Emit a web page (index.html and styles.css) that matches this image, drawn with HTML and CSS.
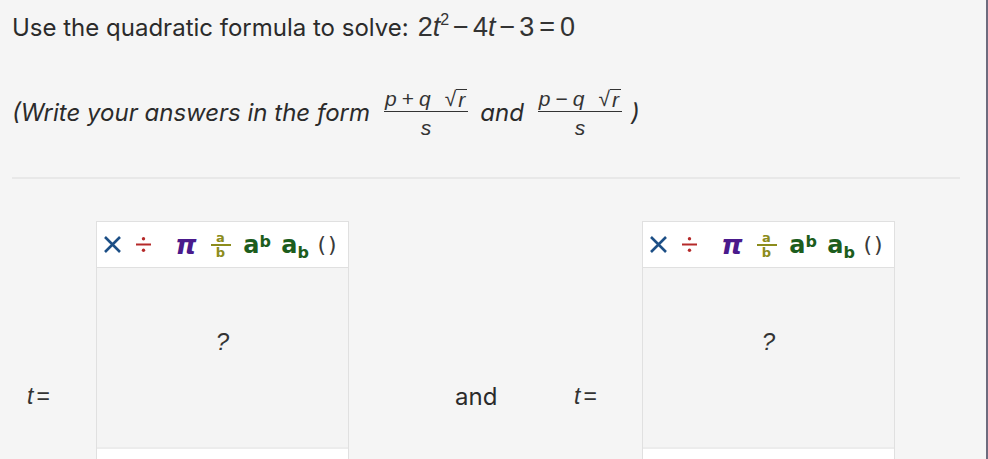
FILE: index.html
```html
<!DOCTYPE html>
<html>
<head>
<meta charset="utf-8">
<link rel="stylesheet" href="styles.css">
</head>
<body>
<div class="page">
  <p class="question"><span class="qtext">Use the quadratic formula to solve:</span> <span class="math big">2<i>t</i><sup>2</sup><span class="op">−</span>4<i>t</i><span class="op">−</span>3<span class="eq">=</span>0</span></p>
  <p class="hint"><i>(Write your answers in the form</i>
    <span class="frac math"><span class="num">p<span class="op">+</span>q<span class="sqrt"><span class="rad">√</span><span class="under">r</span></span></span><span class="den">s</span></span>
    <i>and</i>
    <span class="frac math"><span class="num">p<span class="op">−</span>q<span class="sqrt"><span class="rad">√</span><span class="under">r</span></span></span><span class="den">s</span></span><i class="close">)</i></p>
  <div class="rule"></div>
  <div class="answers">
    <div class="label first math"><i>t</i><span class="eq">=</span></div>
    <div class="box">
      <div class="toolbar">
        <span class="tb times"><svg width="19" height="19" viewBox="0 0 19 19"><path d="M2 2 L17 17 M17 2 L2 17" stroke="#1d4f86" stroke-width="2.6" fill="none"/></svg></span>
        <span class="tb div"><svg width="15" height="17" viewBox="0 0 15 17"><rect x="0" y="7.5" width="15" height="2" fill="#b52a2a"/><circle cx="7.5" cy="2.8" r="1.7" fill="#b52a2a"/><circle cx="7.5" cy="14.2" r="1.7" fill="#b52a2a"/></svg></span>
        <span class="tb pi">π</span>
        <span class="tb fr"><span>a</span><span class="bar"></span><span>b</span></span>
        <span class="tb pow">a<span class="s">b</span></span>
        <span class="tb sub">a<span class="s">b</span></span>
        <span class="tb par">()</span>
      </div>
      <div class="preview"><i>?</i></div>
      <div class="entry"></div>
    </div>
    <div class="and">and</div>
    <div class="label second math"><i>t</i><span class="eq">=</span></div>
    <div class="box">
      <div class="toolbar">
        <span class="tb times"><svg width="19" height="19" viewBox="0 0 19 19"><path d="M2 2 L17 17 M17 2 L2 17" stroke="#1d4f86" stroke-width="2.6" fill="none"/></svg></span>
        <span class="tb div"><svg width="15" height="17" viewBox="0 0 15 17"><rect x="0" y="7.5" width="15" height="2" fill="#b52a2a"/><circle cx="7.5" cy="2.8" r="1.7" fill="#b52a2a"/><circle cx="7.5" cy="14.2" r="1.7" fill="#b52a2a"/></svg></span>
        <span class="tb pi">π</span>
        <span class="tb fr"><span>a</span><span class="bar"></span><span>b</span></span>
        <span class="tb pow">a<span class="s">b</span></span>
        <span class="tb sub">a<span class="s">b</span></span>
        <span class="tb par">()</span>
      </div>
      <div class="preview"><i>?</i></div>
      <div class="entry"></div>
    </div>
  </div>
</div>
</body>
</html>
```
FILE: styles.css
```css
html, body {
  margin: 0;
  padding: 0;
  background: #f5f5f5;
  overflow: hidden;
}
body {
  font-family: Inter, "Liberation Sans", sans-serif;
  color: #2b2b2b;
  height: 459px;
  border-right: 2px solid #6d6b7e;
  box-sizing: border-box;
}
.page {
  padding: 0 12px;
}
.question {
  margin: 0;
  padding-top: 12px;
  font-size: 24px;
  line-height: 30px;
  display: flex;
  align-items: baseline;
  gap: 9px;
}
.math {
  font-family: "Liberation Sans", sans-serif;
  color: #333;
  font-size: 23px;
}
.math.big {
  font-size: 27px;
}
.math i {
  font-style: italic;
}
.math sup {
  font-size: 16px;
  vertical-align: 11px;
  line-height: 0;
}
.math .op {
  margin: 0 4px;
}
.math .eq {
  margin: 0 5px;
}
.hint {
  margin: 0;
  margin-top: 45px;
  font-size: 24px;
  display: flex;
  align-items: center;
  gap: 7px;
  line-height: 28px;
}
.hint i {
  font-style: italic;
}
.hint .close {
  margin-left: -3px;
}
.frac {
  display: inline-flex;
  flex-direction: column;
  align-items: center;
  font-size: 21px;
  font-style: italic;
  line-height: 21px;
  margin: 0 5px 0 7px;
}
.frac .num {
  border-bottom: 1px solid #333;
  padding: 0 1px 2px;
  display: flex;
  align-items: flex-end;
  white-space: pre;
}
.frac .den {
  padding-top: 5px;
}
.frac .op {
  font-style: normal;
  margin: 0 5px;
}
.sqrt {
  display: inline-flex;
  align-items: flex-end;
  margin-left: 14px;
}
.sqrt .rad {
  font-style: normal;
  font-size: 21px;
}
.sqrt .under {
  border-top: 1px solid #333;
  line-height: 19px;
  padding: 0 2px;
}
.rule {
  margin-top: 39px;
  height: 2px;
  background: #e8e8e8;
  margin-right: 14px;
}
.answers {
  display: flex;
  align-items: center;
  margin-top: 42px;
}
.label {
  white-space: nowrap;
  box-sizing: border-box;
  flex: none;
}
.label .eq {
  margin: 0 3px;
}
.label.first {
  padding-left: 15px;
  width: 84px;
}
.label.second {
  width: 68px;
}
.and {
  font-size: 24px;
  width: 225px;
  box-sizing: border-box;
  padding-left: 106px;
  flex: none;
}
.box {
  width: 253px;
  box-sizing: border-box;
  border: 1px solid #e0e0e0;
  display: flex;
  flex-direction: column;
  flex: none;
}
.toolbar {
  height: 45px;
  background: #fff;
  border-bottom: 1px solid #e0e0e0;
  display: flex;
  align-items: center;
  padding-left: 6px;
  font-family: "DejaVu Sans", sans-serif;
  font-weight: bold;
}
.tb {
  display: inline-flex;
  align-items: center;
  justify-content: center;
  line-height: 1;
  flex: none;
}
.times {
  width: 19px;
  margin-right: 14px;
}
.div {
  width: 15px;
  margin-right: 25px;
}
.pi {
  color: #4a1a8c;
  font-style: italic;
  font-size: 27px;
  width: 20px;
  margin-right: 13px;
}
.fr {
  color: #8c8c1c;
  flex-direction: column;
  font-size: 13px;
  width: 23px;
  margin-right: 11px;
  line-height: 11px;
}
.fr .bar {
  width: 20px;
  height: 2px;
  background: #8c8c1c;
  margin: 1px 0;
}
.pow {
  color: #1d5d1d;
  font-size: 24px;
  width: 28px;
  margin-right: 10px;
  align-items: baseline;
}
.pow .s {
  font-size: 16px;
  position: relative;
  top: -6px;
}
.sub {
  color: #1d5d1d;
  font-size: 24px;
  width: 28px;
  margin-right: 10px;
  align-items: baseline;
}
.sub .s {
  font-size: 16px;
  position: relative;
  top: 5px;
}
.par {
  color: #3a3a3a;
  font-size: 22px;
  font-weight: normal;
  width: 18px;
  letter-spacing: 2px;
}
.preview {
  height: 181px;
  background: #f4f4f4;
  border-bottom: 2px solid #ececec;
  display: flex;
  justify-content: center;
  padding-top: 60px;
  box-sizing: border-box;
  font-size: 24px;
}
.preview i {
  font-family: "Liberation Sans", sans-serif;
  font-style: italic;
  color: #333;
}
.entry {
  height: 122px;
  background: #fff;
}
```
